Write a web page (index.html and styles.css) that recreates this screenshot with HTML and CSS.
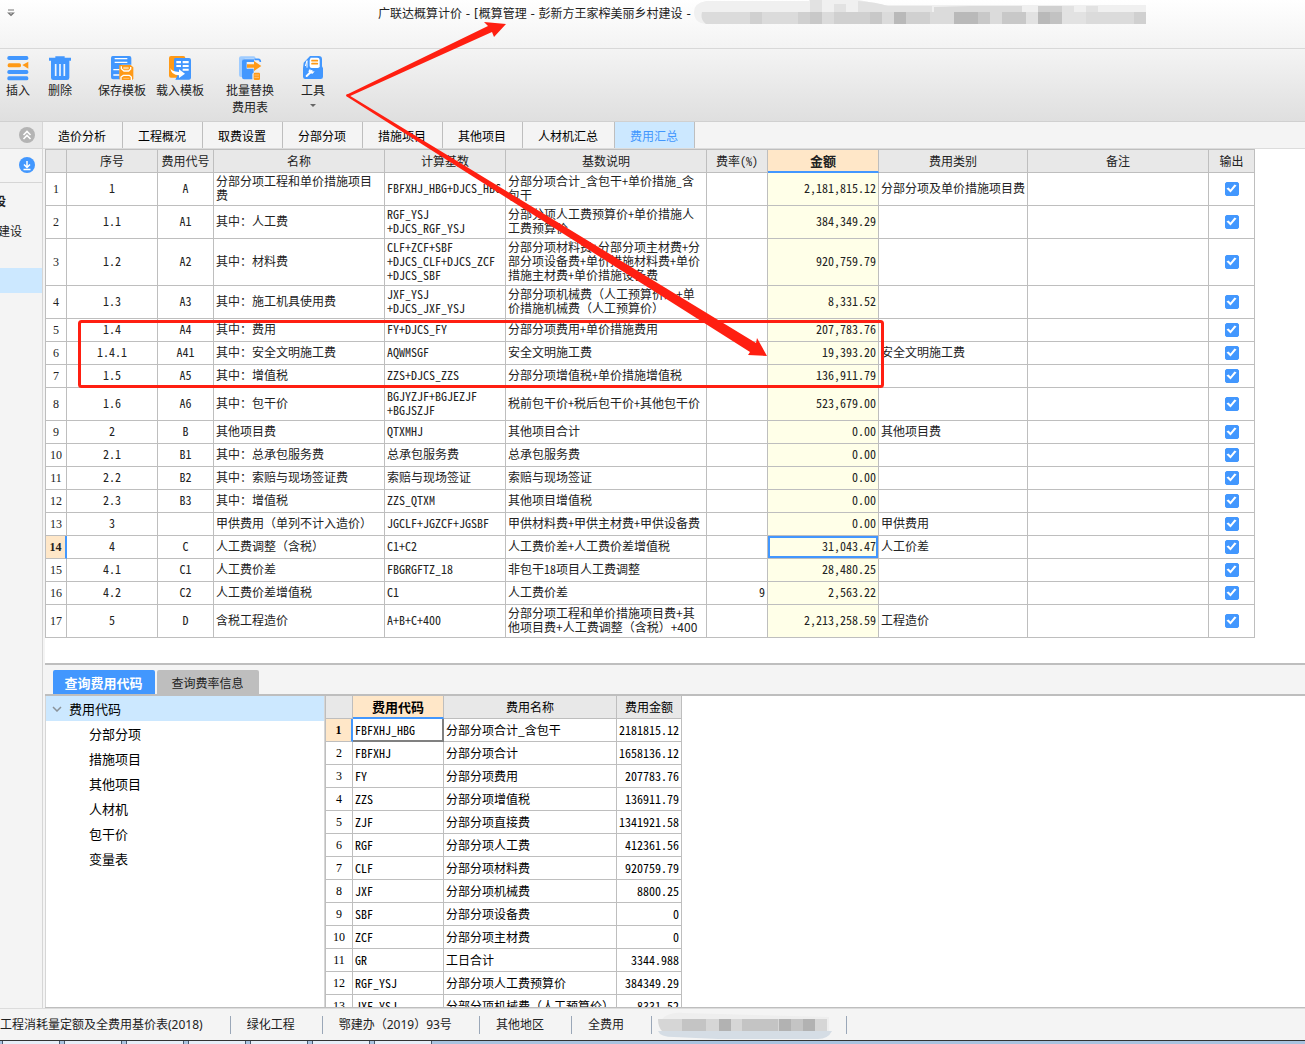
FILE: index.html
```html
<!DOCTYPE html>
<html lang="zh-CN">
<head>
<meta charset="utf-8">
<title>广联达概算计价</title>
<link rel="stylesheet" href="styles.css">
</head>
<body>
<div class="app">
  <header class="titlebar">
    <button class="quick" aria-label="快速访问"><svg width="8" height="9" viewBox="0 0 8 9"><path d="M1 1h6M1.500 4h5L4 6.500z" fill="none" stroke="#777" stroke-width="1.200"/></svg></button>
    <h1>广联达概算计价 - [概算管理 - 彭新方王家榨美丽乡村建设 -</h1>
    <svg class="mask" width="472" height="26" viewBox="0 0 472 26" aria-hidden="true">
      <path d="M12 1H115V0H165L190 5H452V24H12Q0 23 0 12Q0 3 12 1z" fill="#f0f0f0"/>
      <g fill="#e2e2e2"><path d="M116 0h12v12h-12zM140 4h12v8h-12zM164 1q18 1 30 5h44v6h-74zM368 6h12v6h-12zM392 6h12v6h-12z"/></g>
      <g fill="#dbdbdb"><path d="M240 7l36-1h52v6h-88zM8 12h444v12H12Q6 20 8 12z"/></g>
      <path d="M344 6h24v6h-24z" fill="#d0d0d0"/>
      <path d="M56 12h12v12H56zM104 12h12v12h-12zM140 12h36v12h-36zM212 12h24v12h-24zM440 12h12v12h-12z" fill="#d0d0d0"/>
      <path d="M116 12h12v12h-12zM176 12h12v12h-12zM284 12h12v12h-12zM308 12h24v12h-24z" fill="#c8c8c8"/>
      <path d="M200 12h12v12h-12zM260 12h24v12h-24zM344 12h12v12h-12z" fill="#b9b9b9"/>
      <path d="M332 12h12v12h-12zM368 12h24v12h-24z" fill="#e2e2e2"/>
      <path d="M356 12h12v12h-12z" fill="#c2c2c2"/>
    </svg>
  </header>

  <nav class="toolbar">
    <button class="tool">
      <svg width="24" height="26" viewBox="18 165 72 78"><g fill="#4297fe"><rect x="22" y="168" width="63" height="12" rx="5"/><rect x="22" y="210" width="63" height="12" rx="5"/><rect x="22" y="229" width="63" height="12" rx="5"/></g><rect x="23" y="190" width="40" height="12" rx="5" fill="#ff9a17"/><path d="M67 195l18-10v21z" fill="#ff9a17"/></svg>
      <span>插入</span>
    </button>
    <button class="tool gap-s">
      <svg width="24" height="26" viewBox="144 165 72 78"><path d="M147 173h19v-4h28v4h19v9h-5v51q0 7-7 7h-41q-7 0-7-7v-51h-6z" fill="#4297fe"/><path d="M167 192v36M180 192v36M193 192v36" stroke="#eef5fd" stroke-width="5"/></svg>
      <span>删除</span>
    </button>
    <button class="tool wide gap-m">
      <svg width="24" height="26" viewBox="330 165 72 78"><path d="M338 168h50q6 0 6 6v20h-28q-7 0-7 8v36h-20q-6 0-6-6v-58q0-6 5-6z" fill="#4297fe"/><path d="M344 176h38M344 187h38M340 209h19M340 225h19" stroke="#fff" stroke-width="4"/><path d="M358 195h34l8 7v33q0 5-5 5h-32q-5 0-5-5z" fill="#ff9a17"/><path d="M364 199v7l8 7h14l6-6v-6M363 240v-9l7-5h18l6 5v9" fill="none" stroke="#fff" stroke-width="4"/><path d="M371 202h14v5h-14zM370 235h18" fill="#ffd79e" stroke="#ffd79e" stroke-width="2"/></svg>
      <span>保存模板</span>
    </button>
    <button class="tool wide gap-xs">
      <svg width="24" height="26" viewBox="504 165 72 78"><rect x="507" y="168" width="49" height="65" rx="6" fill="#ff9a17"/><path d="M526 174h41q6 0 6 6v53q0 6-6 6h-41l8-16q-12-2-12-14v-29q0-6 4-6z" fill="#4297fe"/><path d="M529 183h14v7h-14zM548 183h18v7h-18zM529 195h14v6h-14zM548 195h18v6h-18zM548 206h18v6h-18z" fill="#fff"/><path d="M511 204q3 11 26 12v-8l18 13-18 13v-8q-24 0-26-22z" fill="#fff"/></svg>
      <span>载入模板</span>
    </button>
    <button class="tool wide gap-l">
      <svg width="24" height="26" viewBox="714 165 72 78"><path d="M723 169h38q6 0 6 7h-31q-9 0-9 9v46h-4q-6 0-6-6v-50q0-6 6-6z" fill="#9fccff"/><path d="M732 178h30v8h-22v20h21v12q-4 0-4 5v15h-25q-6 0-6-6v-48q0-6 6-6z" fill="#4297fe"/><path d="M741 193h21v-10l22 15-22 15v-10h-21z" fill="#ff9a17"/><path d="M763 178h12q6 0 6 8" fill="none" stroke="#4297fe" stroke-width="5"/><rect x="761" y="218" width="19" height="22" rx="4" fill="#ff9a17"/><path d="M763 225h14M763 232h14" stroke="#ffd79e" stroke-width="2"/></svg>
      <span>批量替换<br>费用表</span>
    </button>
    <button class="tool gap-xl">
      <svg width="24" height="26" viewBox="903 165 72 78"><path d="M930 168h26q10 0 10 10v21l3 6v25q0 7-7 7h-46q-7 0-7-7v-25l2-17z" fill="#4297fe"/><path d="M932 173h20q7 0 7 7v19q0 5-6 5h-18q-6 0-6-6v-18z" fill="#fff"/><path d="M936 182h16M936 191h16" stroke="#ff9a17" stroke-width="5" stroke-linecap="round"/><path d="M916 198l5-16v21" fill="none" stroke="#fff" stroke-width="3"/><path d="M920 228l15-15" fill="none" stroke="#fff" stroke-width="6" stroke-linecap="round"/><path d="M930 206l4 9 10-1-6 7-9-1-4-6z" fill="#fff"/></svg>
      <span>工具</span>
      <i class="caret"></i>
    </button>
  </nav>

  <div class="body">
    <aside class="side">
      <div class="side-head"><button class="round gray" aria-label="收起"><svg width="16" height="16" viewBox="0 0 16 16"><path d="M4.500 8L8 4.500 11.500 8M4.500 12L8 8.500l3.500 3.500" fill="none" stroke="#fff" stroke-width="1.600"/></svg></button></div>
      <div class="side-sub"><button class="round blue" aria-label="下载"><svg width="16" height="16" viewBox="0 0 16 16"><path d="M8 4v6M5 7.500L8 10.500l3-3M4.500 12.500h7" fill="none" stroke="#fff" stroke-width="1.500"/></svg></button></div>
      <ul class="side-tree">
        <li class="strong">设</li>
        <li>建设</li>
        <li class="picked"></li>
      </ul>
    </aside>

    <main class="work">
      <div class="tabs" role="tablist">
        <button role="tab">造价分析</button><button role="tab">工程概况</button><button role="tab">取费设置</button><button role="tab">分部分项</button><button role="tab">措施项目</button><button role="tab">其他项目</button><button role="tab" class="long">人材机汇总</button><button role="tab" class="on" aria-selected="true">费用汇总</button>
      </div>

      <section class="summary">
        <table class="grid main">
          <colgroup><col class="w-no"><col class="w-seq"><col class="w-code"><col class="w-name"><col class="w-base"><col class="w-desc"><col class="w-rate"><col class="w-sum"><col class="w-kind"><col class="w-note"><col class="w-out"></colgroup>
          <thead><tr><th></th><th>序号</th><th>费用代号</th><th>名称</th><th>计算基数</th><th>基数说明</th><th class="hw">费率(%)</th><th class="cur">金额</th><th>费用类别</th><th>备注</th><th>输出</th></tr></thead>
          <tbody>
            <tr class="h2"><th>1</th><td>1</td><td>A</td><td>分部分项工程和单价措施项目<br>费</td><td>FBFXHJ_HBG+DJCS_HBG</td><td class="hw">分部分项合计_含包干+单价措施_含<br>包干</td><td></td><td>2,181,815.12</td><td>分部分项及单价措施项目费</td><td></td><td><input type="checkbox" aria-label="输出 1" checked></td></tr>
            <tr class="h2"><th>2</th><td>1.1</td><td>A1</td><td>其中：人工费</td><td>RGF_YSJ<br>+DJCS_RGF_YSJ</td><td class="hw">分部分项人工费预算价+单价措施人<br>工费预算价</td><td></td><td>384,349.29</td><td></td><td></td><td><input type="checkbox" aria-label="输出 2" checked></td></tr>
            <tr class="h3"><th>3</th><td>1.2</td><td>A2</td><td>其中：材料费</td><td>CLF+ZCF+SBF<br>+DJCS_CLF+DJCS_ZCF<br>+DJCS_SBF</td><td class="hw">分部分项材料费+分部分项主材费+分<br>部分项设备费+单价措施材料费+单价<br>措施主材费+单价措施设备费</td><td></td><td>920,759.79</td><td></td><td></td><td><input type="checkbox" aria-label="输出 3" checked></td></tr>
            <tr class="h2"><th>4</th><td>1.3</td><td>A3</td><td>其中：施工机具使用费</td><td>JXF_YSJ<br>+DJCS_JXF_YSJ</td><td>分部分项机械费（人工预算价）+单<br>价措施机械费（人工预算价）</td><td></td><td>8,331.52</td><td></td><td></td><td><input type="checkbox" aria-label="输出 4" checked></td></tr>
            <tr><th>5</th><td>1.4</td><td>A4</td><td>其中：费用</td><td>FY+DJCS_FY</td><td class="hw">分部分项费用+单价措施费用</td><td></td><td>207,783.76</td><td></td><td></td><td><input type="checkbox" aria-label="输出 5" checked></td></tr>
            <tr><th>6</th><td>1.4.1</td><td>A41</td><td>其中：安全文明施工费</td><td>AQWMSGF</td><td>安全文明施工费</td><td></td><td>19,393.20</td><td>安全文明施工费</td><td></td><td><input type="checkbox" aria-label="输出 6" checked></td></tr>
            <tr><th>7</th><td>1.5</td><td>A5</td><td>其中：增值税</td><td>ZZS+DJCS_ZZS</td><td class="hw">分部分项增值税+单价措施增值税</td><td></td><td>136,911.79</td><td></td><td></td><td><input type="checkbox" aria-label="输出 7" checked></td></tr>
            <tr class="h2"><th>8</th><td>1.6</td><td>A6</td><td>其中：包干价</td><td>BGJYZJF+BGJEZJF<br>+BGJSZJF</td><td class="hw">税前包干价+税后包干价+其他包干价</td><td></td><td>523,679.00</td><td></td><td></td><td><input type="checkbox" aria-label="输出 8" checked></td></tr>
            <tr><th>9</th><td>2</td><td>B</td><td>其他项目费</td><td>QTXMHJ</td><td>其他项目合计</td><td></td><td>0.00</td><td>其他项目费</td><td></td><td><input type="checkbox" aria-label="输出 9" checked></td></tr>
            <tr><th>10</th><td>2.1</td><td>B1</td><td>其中：总承包服务费</td><td>总承包服务费</td><td>总承包服务费</td><td></td><td>0.00</td><td></td><td></td><td><input type="checkbox" aria-label="输出 10" checked></td></tr>
            <tr><th>11</th><td>2.2</td><td>B2</td><td>其中：索赔与现场签证费</td><td>索赔与现场签证</td><td>索赔与现场签证</td><td></td><td>0.00</td><td></td><td></td><td><input type="checkbox" aria-label="输出 11" checked></td></tr>
            <tr><th>12</th><td>2.3</td><td>B3</td><td>其中：增值税</td><td>ZZS_QTXM</td><td>其他项目增值税</td><td></td><td>0.00</td><td></td><td></td><td><input type="checkbox" aria-label="输出 12" checked></td></tr>
            <tr><th>13</th><td>3</td><td></td><td>甲供费用（单列不计入造价）</td><td>JGCLF+JGZCF+JGSBF</td><td class="hw">甲供材料费+甲供主材费+甲供设备费</td><td></td><td>0.00</td><td>甲供费用</td><td></td><td><input type="checkbox" aria-label="输出 13" checked></td></tr>
            <tr class="active"><th>14</th><td>4</td><td>C</td><td>人工费调整（含税）</td><td>C1+C2</td><td class="hw">人工费价差+人工费价差增值税</td><td></td><td>31,043.47</td><td>人工价差</td><td></td><td><input type="checkbox" aria-label="输出 14" checked></td></tr>
            <tr><th>15</th><td>4.1</td><td>C1</td><td>人工费价差</td><td>FBGRGFTZ_18</td><td class="hw">非包干18项目人工费调整</td><td></td><td>28,480.25</td><td></td><td></td><td><input type="checkbox" aria-label="输出 15" checked></td></tr>
            <tr><th>16</th><td>4.2</td><td>C2</td><td>人工费价差增值税</td><td>C1</td><td>人工费价差</td><td>9</td><td>2,563.22</td><td></td><td></td><td><input type="checkbox" aria-label="输出 16" checked></td></tr>
            <tr class="h2"><th>17</th><td>5</td><td>D</td><td>含税工程造价</td><td>A+B+C+400</td><td>分部分项工程和单价措施项目费+其<br>他项目费+人工费调整（含税）+400</td><td></td><td>2,213,258.59</td><td>工程造价</td><td></td><td><input type="checkbox" aria-label="输出 17" checked></td></tr>
          </tbody>
        </table>
      </section>

      <div class="query-tabs" role="tablist">
        <button role="tab" class="on" aria-selected="true">查询费用代码</button>
        <button role="tab">查询费率信息</button>
      </div>

      <section class="query">
        <ul class="tree">
          <li class="root"><svg width="10" height="6" viewBox="0 0 10 6"><path d="M1 1l4 4 4-4" fill="none" stroke="#8a9299" stroke-width="1.500"/></svg>费用代码</li>
          <li>分部分项</li>
          <li>措施项目</li>
          <li>其他项目</li>
          <li>人材机</li>
          <li>包干价</li>
          <li>变量表</li>
        </ul>
        <div class="codes">
          <table class="grid code">
            <colgroup><col class="c-no"><col class="c-code"><col class="c-name"><col class="c-sum"></colgroup>
            <thead><tr><th></th><th class="cur">费用代码</th><th>费用名称</th><th>费用金额</th></tr></thead>
            <tbody>
              <tr class="active"><th>1</th><td>FBFXHJ_HBG</td><td>分部分项合计_含包干</td><td>2181815.12</td></tr>
              <tr><th>2</th><td>FBFXHJ</td><td>分部分项合计</td><td>1658136.12</td></tr>
              <tr><th>3</th><td>FY</td><td>分部分项费用</td><td>207783.76</td></tr>
              <tr><th>4</th><td>ZZS</td><td>分部分项增值税</td><td>136911.79</td></tr>
              <tr><th>5</th><td>ZJF</td><td>分部分项直接费</td><td>1341921.58</td></tr>
              <tr><th>6</th><td>RGF</td><td>分部分项人工费</td><td>412361.56</td></tr>
              <tr><th>7</th><td>CLF</td><td>分部分项材料费</td><td>920759.79</td></tr>
              <tr><th>8</th><td>JXF</td><td>分部分项机械费</td><td>8800.25</td></tr>
              <tr><th>9</th><td>SBF</td><td>分部分项设备费</td><td>0</td></tr>
              <tr><th>10</th><td>ZCF</td><td>分部分项主材费</td><td>0</td></tr>
              <tr><th>11</th><td>GR</td><td>工日合计</td><td>3344.988</td></tr>
              <tr><th>12</th><td>RGF_YSJ</td><td>分部分项人工费预算价</td><td>384349.29</td></tr>
              <tr><th>13</th><td>JXF_YSJ</td><td>分部分项机械费（人工预算价）</td><td>8331.52</td></tr>
            </tbody>
          </table>
        </div>
      </section>
    </main>
  </div>

  <footer class="status">
    <span>工程消耗量定额及全费用基价表(2018)</span>
    <span>绿化工程</span>
    <span>鄂建办（2019）93号</span>
    <span>其他地区</span>
    <span>全费用</span>
    <span class="masked"><svg width="174" height="28" viewBox="0 0 174 28" aria-hidden="true"><path d="M6 6q8-5 20-4l145 4v14H6Q-2 14 6 6z" fill="#eee"/><path d="M0 20h174q-4 8-14 8H60L16 26Q2 26 0 20z" fill="#d5dde5"/><path d="M0 8h169v12H4Q0 16 0 8z" fill="#d6d6d6"/><path d="M24 8h24v12H24zM84 8h36v12H84zM133 8h12v12h-12z" fill="#c4c4c4"/><path d="M61 8h12v12H61zM121 8h12v12h-12zM145 8h12v12h-12z" fill="#b2b2b2"/></svg></span>
  </footer>
  <div class="taskbar"><i></i><i></i><i></i><i></i><i></i><i></i><i></i></div>

  <svg class="marks" width="900" height="400" viewBox="0 0 900 400" aria-hidden="true">
    <g fill="#ff1f11">
      <path d="M346 95L488 26l-4-4 22 2-12 13-2-5L348 97z"/>
      <path d="M347 94L756 343l1-5 10 18-19-1 2-3L346 96z"/>
    </g>
    <rect x="79.500" y="321.500" width="803" height="65" rx="2" fill="none" stroke="#ff1f11" stroke-width="3"/>
  </svg>
</div>
</body>
</html>
```
FILE: styles.css
```css
* { box-sizing: border-box; }
body { margin: 0; font: 12px/14px "Noto Sans CJK SC", sans-serif; color: #222; background: #f4f4f4; }
button { margin: 0; padding: 0; border: 0; background: none; font: inherit; color: inherit; }
ul { margin: 0; padding: 0; list-style: none; }
svg { display: block; flex: none; }
.app { position: relative; display: flex; flex-direction: column; height: 100vh; overflow: hidden; }

.titlebar { flex: none; display: flex; align-items: flex-start; height: 49px; border-bottom: 1px solid #d8d8d8; background: linear-gradient(#fff, #f3f3f3); }
.quick { width: 24px; padding: 9px 7px; }
.titlebar h1 { margin: 0 3px 0 354px; padding-top: 7px; font-family: "DejaVu Sans", "Noto Sans CJK SC", sans-serif; font-size: 12px; font-weight: 400; line-height: 14px; white-space: nowrap; }

.toolbar { flex: none; display: flex; align-items: flex-start; height: 73px; padding-top: 6px; border-bottom: 1px solid #d0d0d0; background: linear-gradient(#f4f4f4, #dfdfdf); }
.tool { display: flex; flex-direction: column; align-items: center; width: 36px; line-height: 17px; white-space: nowrap; }
.tool.wide { width: 56px; }
.gap-xs { margin-left: 2px; }
.gap-s { margin-left: 6px; }
.gap-m { margin-left: 16px; }
.gap-l { margin-left: 14px; }
.gap-xl { margin-left: 17px; }
.caret { margin-top: 6px; border: 3px solid transparent; border-top-color: #666; border-bottom: 0; }

.body { flex: 1; min-height: 0; display: flex; }
.side { flex: none; width: 43px; border-right: 1px solid #d6d6d6; background: #f4f4f4; overflow: hidden; }
.side-head { display: flex; justify-content: flex-end; height: 27px; padding: 5px 7px; background: #e9e9e9; border-bottom: 1px solid #d6d6d6; }
.side-sub { display: flex; justify-content: flex-end; height: 34px; padding: 8px 7px; border-bottom: 1px solid #d6d6d6; }
.round { width: 16px; height: 16px; border-radius: 50%; }
.round.gray { background: #b4b4b4; }
.round.blue { background: #4297fe; }
.side-tree { padding-top: 3px; }
.side-tree li { height: 30px; line-height: 30px; margin-left: -2px; white-space: nowrap; }
.side-tree .strong { font-weight: 700; margin-left: -6px; }
.side-tree .picked { height: 25px; margin: 22px 0 0; background: #cce8ff; }

.work { flex: 1; min-width: 0; display: flex; flex-direction: column; }
.tabs { flex: none; display: flex; height: 27px; border-bottom: 1px solid #dcdcdc; background: #f4f4f4; color: #000; }
.tabs button { width: 80px; padding: 2px 1px 0 0; border-right: 1px solid #bebebe; }
.tabs .long { width: 92px; }
.tabs .on { background: #cce8ff; color: #4297fe; }

.summary { flex: none; margin-left: 2px; padding-bottom: 25px; background: #fff; border-bottom: 2px solid #bebebe; overflow: hidden; }
.grid { table-layout: fixed; border-collapse: separate; border-spacing: 0; border-left: 1px solid #bebebe; background: #fff; }
.grid th, .grid td { height: 23px; padding: 0 2px; border-right: 1px solid #bebebe; border-bottom: 1px solid #bebebe; font-weight: 400; line-height: 14px; white-space: nowrap; overflow: hidden; text-align: left; }
.grid th { padding: 0; text-align: center; }
.grid thead th { background: #e8e8e8; }
.grid thead .cur { background: #ffe7c8; border-bottom: 2px solid #4297fe; font-size: 13px; font-weight: 700; }
.grid .hw, .grid td { font-feature-settings: "hwid"; }
.grid tbody th { font-family: "Liberation Serif", serif; font-size: 12px; }
.grid .active th { background: #ffe7c8; border-right: 2px solid #4297fe; font-weight: 700; }

.main { width: 1210px; border-top: 1px solid #bebebe; }
.main td { padding-bottom: 2px; }
.main .h2 td { height: 33px; }
.main .h3 td { height: 47px; }
.main td:nth-child(4), .main td:nth-child(6):not(.hw) { font-feature-settings: normal; }
.main td:nth-child(2), .main td:nth-child(3), .main td:nth-child(11) { text-align: center; }
.main td:nth-child(7), .main td:nth-child(8) { text-align: right; }
.main td:nth-child(8) { background: #ffffe8; }
.main .active td:nth-child(8) { box-shadow: inset 0 0 0 2px #4297fe; }
.w-no { width: 21px; }
.w-seq { width: 91px; }
.w-code { width: 56px; }
.w-name { width: 171px; }
.w-base { width: 121px; }
.w-desc { width: 201px; }
.w-rate { width: 61px; }
.w-sum { width: 111px; }
.w-kind { width: 149px; }
.w-note { width: 181px; }
.w-out { width: 46px; }

input[type="checkbox"] { appearance: none; display: block; width: 14px; height: 14px; margin: 1px auto 0; border-radius: 2px; border: 1px solid #4297fe; background: #fff; }
input[type="checkbox"]:checked { background: #4297fe; }
input[type="checkbox"]:checked::before { content: ""; display: block; width: 12px; height: 12px; background: #fff; clip-path: polygon(1px 6px, 3px 5px, 5px 7px, 9px 2px, 11px 3px, 5px 10px); }

.query-tabs { flex: none; display: flex; gap: 2px; height: 31px; margin-left: 2px; padding: 5px 0 0 8px; border-bottom: 2px solid #bebebe; background: #f4f4f4; }
.query-tabs button { width: 102px; padding: 2px 1px 0 0; border-radius: 2px 2px 0 0; background: #bebebe; }
.query-tabs .on { background: #4297fe; color: #fff; font-size: 13px; font-weight: 700; }

.query { flex: 1; min-height: 0; display: flex; margin-left: 2px; background: #fff; border-bottom: 1px solid #bebebe; }
.tree { flex: none; width: 280px; border: solid #d6d6d6; border-width: 0 1px; color: #000; font-size: 13px; line-height: 25px; }
.tree li { height: 25px; padding-left: 43px; }
.tree .root { display: flex; align-items: center; gap: 7px; padding-left: 6px; background: #cce8ff; }
.codes { flex: 1; min-width: 0; overflow: hidden; }
.code { width: 357px; color: #000; }
.code td:nth-child(4) { text-align: right; }
.code td:nth-child(3) { font-feature-settings: normal; }
.code .active td:nth-child(2) { box-shadow: inset -1px -1px #808080; border-color: #808080; }
.c-no { width: 27px; }
.c-code { width: 91px; }
.c-name { width: 173px; }
.c-sum { width: 65px; }

.status { flex: none; display: flex; align-items: center; height: 32px; background: #f4f4f4; border-top: 1px solid #dcdcdc; overflow: hidden; font-family: "Noto Sans", "Noto Sans CJK SC", sans-serif; }
.status span { height: 18px; padding: 0 27px 0 16px; border-right: 1px solid #9aa7b8; line-height: 18px; white-space: nowrap; }
.status span:first-child { padding-left: 0; }
.status .masked { padding: 0 14px 0 6px; }
.masked svg { margin-top: -5px; }
.taskbar { flex: none; display: flex; gap: 4px; height: 4px; padding-left: 2px; border-top: 1px solid #333; background: #a9c3e0; }
.taskbar i { width: 58px; border: solid #47586d; border-width: 0 1px; background: #e6eef8; }

.marks { position: absolute; left: 0; top: 0; pointer-events: none; }
```
